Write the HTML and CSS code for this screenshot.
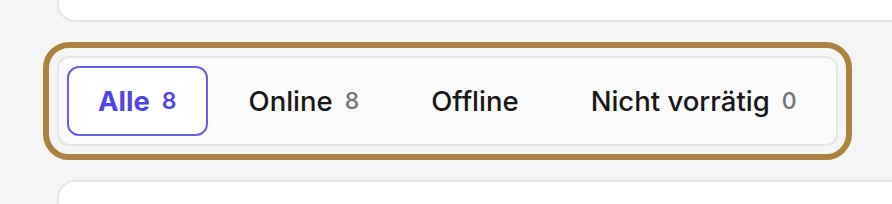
FILE: index.html
```html
<!DOCTYPE html>
<html>
<head>
  <title>Produkte</title>
  <link rel="stylesheet" href="styles.css">
</head>
<body>
  <div class="page">

    <!-- card above -->
    <div class="card card-top"></div>

    <!-- status filter tabs -->
    <div class="tab-bar">
      <button class="tab active">Alle <span class="count">8</span></button>
      <button class="tab">Online <span class="count">8</span></button>
      <button class="tab">Offline</button>
      <button class="tab">Nicht vorrätig <span class="count">0</span></button>
    </div>

    <!-- card below -->
    <div class="card card-bottom"></div>

  </div>
</body>
</html>
```

FILE: styles.css
```css
body {
  background-color: #f5f5f5;
  margin: 0;
  font-family: Inter, "Noto Sans", sans-serif;
}
.page {
  height: 204px;
  overflow: hidden;
  padding-left: 57px;
  display: flex;
  flex-direction: column;
  align-items: flex-start;
  gap: 34px;
}
.card {
  width: 900px;
  height: 80px;
  background-color: #ffffff;
  border: 2px solid #e6e6e6;
  border-radius: 18px;
  box-sizing: border-box;
  flex-shrink: 0;
}
.card-top {
  margin-top: -58px;
}
/* tab bar with the highlight ring */
.tab-bar {
  display: inline-flex;
  gap: 10px;
  padding: 8px;
  margin-top: 0;
  background-color: #fafafa;
  border: 2px solid #e5e5e5;
  border-radius: 12px;
  outline: 6px solid #a9833f;
  outline-offset: 8px;
  flex-shrink: 0;
}
.tab {
  display: flex;
  align-items: center;
  gap: 12px;
  height: 70px;
  box-sizing: border-box;
  padding: 0 29px;
  font-family: inherit;
  font-size: 27.5px;
  font-weight: 500;
  color: #171717;
  background: none;
  border: 2px solid transparent;
  border-radius: 12px;
  cursor: pointer;
}
.tab.active {
  background-color: #ffffff;
  border-color: #6660e0;
  color: #4f46e5;
  font-weight: 700;
}
.count {
  font-size: 23px;
  font-weight: 500;
  color: #737373;
}
.tab.active .count {
  font-weight: 600;
  color: #4f46e5;
}
```
